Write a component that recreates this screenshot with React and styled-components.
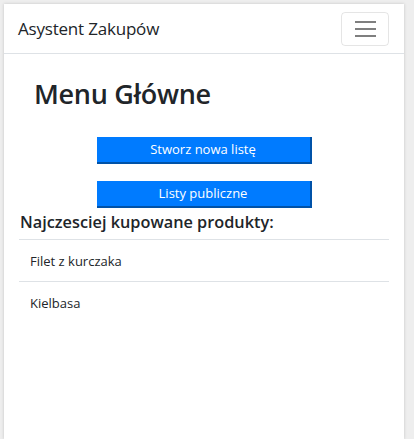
import React from "react";
import styled, { createGlobalStyle } from "styled-components";

const Global = createGlobalStyle`
  html, body { margin: 0; padding: 0; }
  body {
    background: #eeeeee;
    font-family: "Open Sans", "Noto Sans", Arial, sans-serif;
    color: #212529;
    overflow: hidden;
  }
`;

const Page = styled.div`
  padding: 4px 10px 0 4px;
  height: 439px;
  box-sizing: border-box;
`;

const Card = styled.div`
  background: #fff;
  height: 100%;
  box-shadow: 0 0 3px rgba(0, 0, 0, 0.18);
  display: flex;
  flex-direction: column;
`;

const Navbar = styled.nav`
  height: 49px;
  border-bottom: 1px solid #dee2e6;
  display: flex;
  align-items: center;
  justify-content: space-between;
  padding: 0 15px 0 14px;
`;

const Brand = styled.span`
  font-size: 17px;
  color: #212529;
  letter-spacing: -0.2px;
`;

const Toggler = styled.button`
  width: 48px;
  height: 34px;
  border: 1px solid rgba(0, 0, 0, 0.1);
  border-radius: 4px;
  background: transparent;
  display: flex;
  flex-direction: column;
  align-items: center;
  justify-content: center;
  gap: 5px;
  padding: 0;
`;

const Bar = styled.span`
  display: block;
  width: 21px;
  height: 2px;
  background: rgba(0, 0, 0, 0.5);
`;

const Main = styled.main`
  padding: 22px 15px 0 15px;
  display: flex;
  flex-direction: column;
`;

const Title = styled.h1`
  margin: 0 0 0 15px;
  font-size: 27px;
  font-weight: 600;
  line-height: 36px;
  letter-spacing: -0.3px;
`;

const Actions = styled.div`
  display: flex;
  flex-direction: column;
  align-items: center;
  gap: 17px;
  margin-top: 25px;
`;

const ActionButton = styled.button`
  width: 215px;
  height: 27px;
  box-sizing: border-box;
  background: #007bff;
  color: #fff;
  border: none;
  border-right: 2px solid #0052a8;
  border-bottom: 2px solid #0052a8;
  font-family: inherit;
  font-size: 13px;
  padding: 0 0 1px 0;
  line-height: 24px;
`;

const SectionTitle = styled.h2`
  margin: 2px 0 0 1px;
  font-size: 16.3px;
  font-weight: 600;
  line-height: 24px;
`;

const List = styled.ul`
  list-style: none;
  margin: 5px 0 0 0;
  padding: 0;
  width: 370px;
`;

const Item = styled.li`
  border-top: 1px solid #dee2e6;
  padding: 0 11px;
  height: 41px;
  display: flex;
  align-items: center;
  font-size: 13px;
`;

export default function App() {
  return (
    <>
      <Global />
      <Page>
        <Card>
          <Navbar>
            <Brand>Asystent Zakupów</Brand>
            <Toggler aria-label="menu">
              <Bar />
              <Bar />
              <Bar />
            </Toggler>
          </Navbar>
          <Main>
            <Title>Menu Główne</Title>
            <Actions>
              <ActionButton>Stworz nowa listę</ActionButton>
              <ActionButton>Listy publiczne</ActionButton>
            </Actions>
            <SectionTitle>Najczesciej kupowane produkty:</SectionTitle>
            <List>
              <Item>Filet z kurczaka</Item>
              <Item>Kielbasa</Item>
            </List>
          </Main>
        </Card>
      </Page>
    </>
  );
}
